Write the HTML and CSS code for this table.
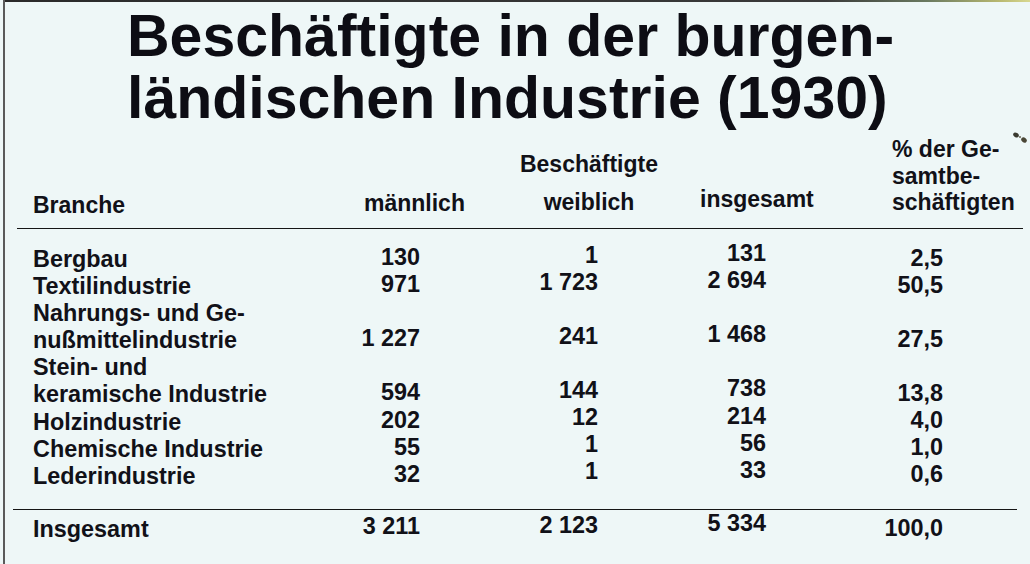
FILE: index.html
```html
<!DOCTYPE html>
<html lang="de">
<head>
<meta charset="utf-8">
<title>Beschäftigte in der burgenländischen Industrie (1930)</title>
<link rel="stylesheet" href="styles.css">
</head>
<body>
<div class="sheet">
  <div class="topline"></div>
  <h1 class="title">Beschäftigte in der burgen-<br>ländischen Industrie (1930)</h1>

  <div class="head">
    <div class="h-branche">Branche</div>
    <div class="h-m">männlich</div>
    <div class="h-group">Beschäftigte</div>
    <div class="h-w">weiblich</div>
    <div class="h-i">insgesamt</div>
    <div class="h-p">% der Ge-<br>samtbe-<br>schäftigten</div>
  </div>

  <div class="rule rule-top"></div>

  <div class="rows">
    <div class="row"><div class="lbl">Bergbau</div><div class="n n-m">130</div><div class="n n-w">1</div><div class="n n-i">131</div><div class="n n-p">2,5</div></div>
    <div class="row"><div class="lbl">Textilindustrie</div><div class="n n-m">971</div><div class="n n-w">1 723</div><div class="n n-i">2 694</div><div class="n n-p">50,5</div></div>
    <div class="row"><div class="lbl">Nahrungs- und Ge-<br>nußmittelindustrie</div><div class="n n-m">1 227</div><div class="n n-w">241</div><div class="n n-i">1 468</div><div class="n n-p">27,5</div></div>
    <div class="row"><div class="lbl">Stein- und<br>keramische Industrie</div><div class="n n-m">594</div><div class="n n-w">144</div><div class="n n-i">738</div><div class="n n-p">13,8</div></div>
    <div class="row"><div class="lbl">Holzindustrie</div><div class="n n-m">202</div><div class="n n-w">12</div><div class="n n-i">214</div><div class="n n-p">4,0</div></div>
    <div class="row"><div class="lbl">Chemische Industrie</div><div class="n n-m">55</div><div class="n n-w">1</div><div class="n n-i">56</div><div class="n n-p">1,0</div></div>
    <div class="row"><div class="lbl">Lederindustrie</div><div class="n n-m">32</div><div class="n n-w">1</div><div class="n n-i">33</div><div class="n n-p">0,6</div></div>
  </div>

  <div class="rule rule-bottom"></div>

  <div class="row total"><div class="lbl">Insgesamt</div><div class="n n-m t-m">3 211</div><div class="n n-w">2 123</div><div class="n n-i">5 334</div><div class="n n-p">100,0</div></div>

  <svg class="speck" width="18" height="16" viewBox="0 0 18 16" aria-hidden="true">
    <ellipse cx="4" cy="4" rx="3" ry="2.2" fill="#3a3a30" transform="rotate(30 4 4)"/>
    <ellipse cx="12" cy="9" rx="3" ry="2.4" fill="#4a4636" transform="rotate(40 12 9)"/>
    <circle cx="8" cy="6" r="1" fill="#6a6656"/>
  </svg>
</div>
</body>
</html>
```

FILE: styles.css
```css
html, body {
  margin: 0;
  padding: 0;
  background: #eef7f7;
  overflow: hidden;
}

body {
  width: 1030px;
  height: 564px;
  font-family: "Liberation Sans", Arial, sans-serif;
  font-weight: bold;
  color: #111118;
}

.sheet {
  position: relative;
  margin-left: 3px;
  height: 564px;
  border-left: 2px solid #5a5a5a;
  box-sizing: border-box;
}

.topline {
  height: 2px;
  background: linear-gradient(to right, #2a2a2a 0%, #3a3a3a 80%, #6a7a60 90%, #b8b870 97%, #d8d890 100%);
}

.title {
  margin: 3px 0 0 0;
  padding-left: 122px;
  font-size: 59px;
  line-height: 62px;
  font-weight: bold;
  color: #0d0d14;
  white-space: nowrap;
}

/* header */
.head {
  margin-top: 7px;
  padding-left: 28px;
  display: grid;
  grid-template-columns: 331px 136px 178px 214px 1fr;
  grid-template-rows: 41.5px 38px;
  font-size: 23px;
  line-height: 26.5px;
  white-space: nowrap;
}

.head > div {
  align-self: end;
}

.h-branche { grid-row: 2; grid-column: 1; margin-bottom: -3px; }
.h-m { grid-row: 2; grid-column: 2; margin-bottom: -1px; }
.h-group { grid-row: 1; grid-column: 3; text-align: center; }
.h-w { grid-row: 2; grid-column: 3; text-align: center; }
.h-i { grid-row: 2; grid-column: 4; padding-left: 22px; margin-bottom: 3px; }
.h-p { grid-row: 1 / 3; grid-column: 5; }

/* rules */
.rule {
  border-top: 1.5px solid #151515;
}

.rule-top {
  margin-top: 12px;
  margin-left: 12px;
  width: 1006px;
}

.rule-bottom {
  margin-top: 19px;
  margin-left: 8px;
  width: 1004px;
}

/* body rows */
.rows {
  padding-top: 17.5px;
}

.row {
  display: grid;
  grid-template-columns: 280px 107px 178px 168px 177px;
  padding-left: 28px;
  align-items: end;
  font-size: 23.4px;
  line-height: 27.1px;
  white-space: nowrap;
}

.n {
  text-align: right;
}

.n-m { margin: -2px 0 2px; }
.n-w { margin: -4.5px 0 4.5px; }
.n-i { margin: -6px 0 6px; }
.n-p { margin: -1.5px 0 1.5px; }

.total {
  margin-top: 6.5px;
}

.total .t-m { margin: -3px 0 3px; }

.speck {
  position: absolute;
  left: 1007px;
  top: 131px;
}
```
